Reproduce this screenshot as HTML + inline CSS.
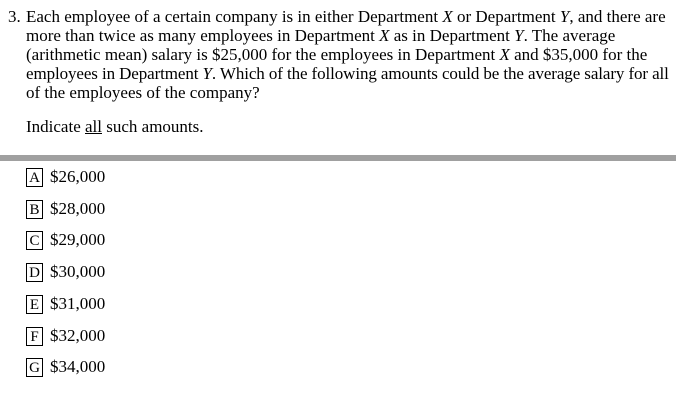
<!DOCTYPE html><html><head><style>
body{margin:0;background:#fff;width:676px;height:401px;overflow:hidden;font-family:"Liberation Serif",serif;color:#000;}
.q{position:absolute;left:26px;top:7px;width:660px;font-size:17px;line-height:19px;white-space:nowrap;}
.n{position:absolute;left:-18px;top:0}
.bar{position:absolute;left:0;top:155px;width:676px;height:6px;background:#a0a0a0}
.o{position:absolute;left:26px;font-size:17px;line-height:18px;}
.b{display:inline-block;width:15px;height:17px;border:1px solid #000;text-align:center;line-height:18px;font-size:15px;margin-right:7px;vertical-align:top}
</style></head><body>
<div class="q"><span class="n">3.</span>Each employee of a certain company is in either Department <i>X</i> or Department <i>Y</i>, and there are<br>more than twice as many employees in Department <i>X</i> as in Department <i>Y</i>. The average<br>(arithmetic mean) salary is $25,000 for the employees in Department <i>X</i> and $35,000 for the<br><span style="letter-spacing:-0.1px">employees in Department <i>Y</i>. Which of the following amounts could be the average salary for all</span><br>of the employees of the company?<div style="margin-top:15px">Indicate <u>all</u> such amounts.</div></div>
<div class="bar"></div>
<div class="o" style="top:168px"><span class="b">A</span>$26,000</div>
<div class="o" style="top:200px"><span class="b">B</span>$28,000</div>
<div class="o" style="top:231px"><span class="b">C</span>$29,000</div>
<div class="o" style="top:263px"><span class="b">D</span>$30,000</div>
<div class="o" style="top:295px"><span class="b">E</span>$31,000</div>
<div class="o" style="top:327px"><span class="b">F</span>$32,000</div>
<div class="o" style="top:358px"><span class="b">G</span>$34,000</div>
</body></html>
